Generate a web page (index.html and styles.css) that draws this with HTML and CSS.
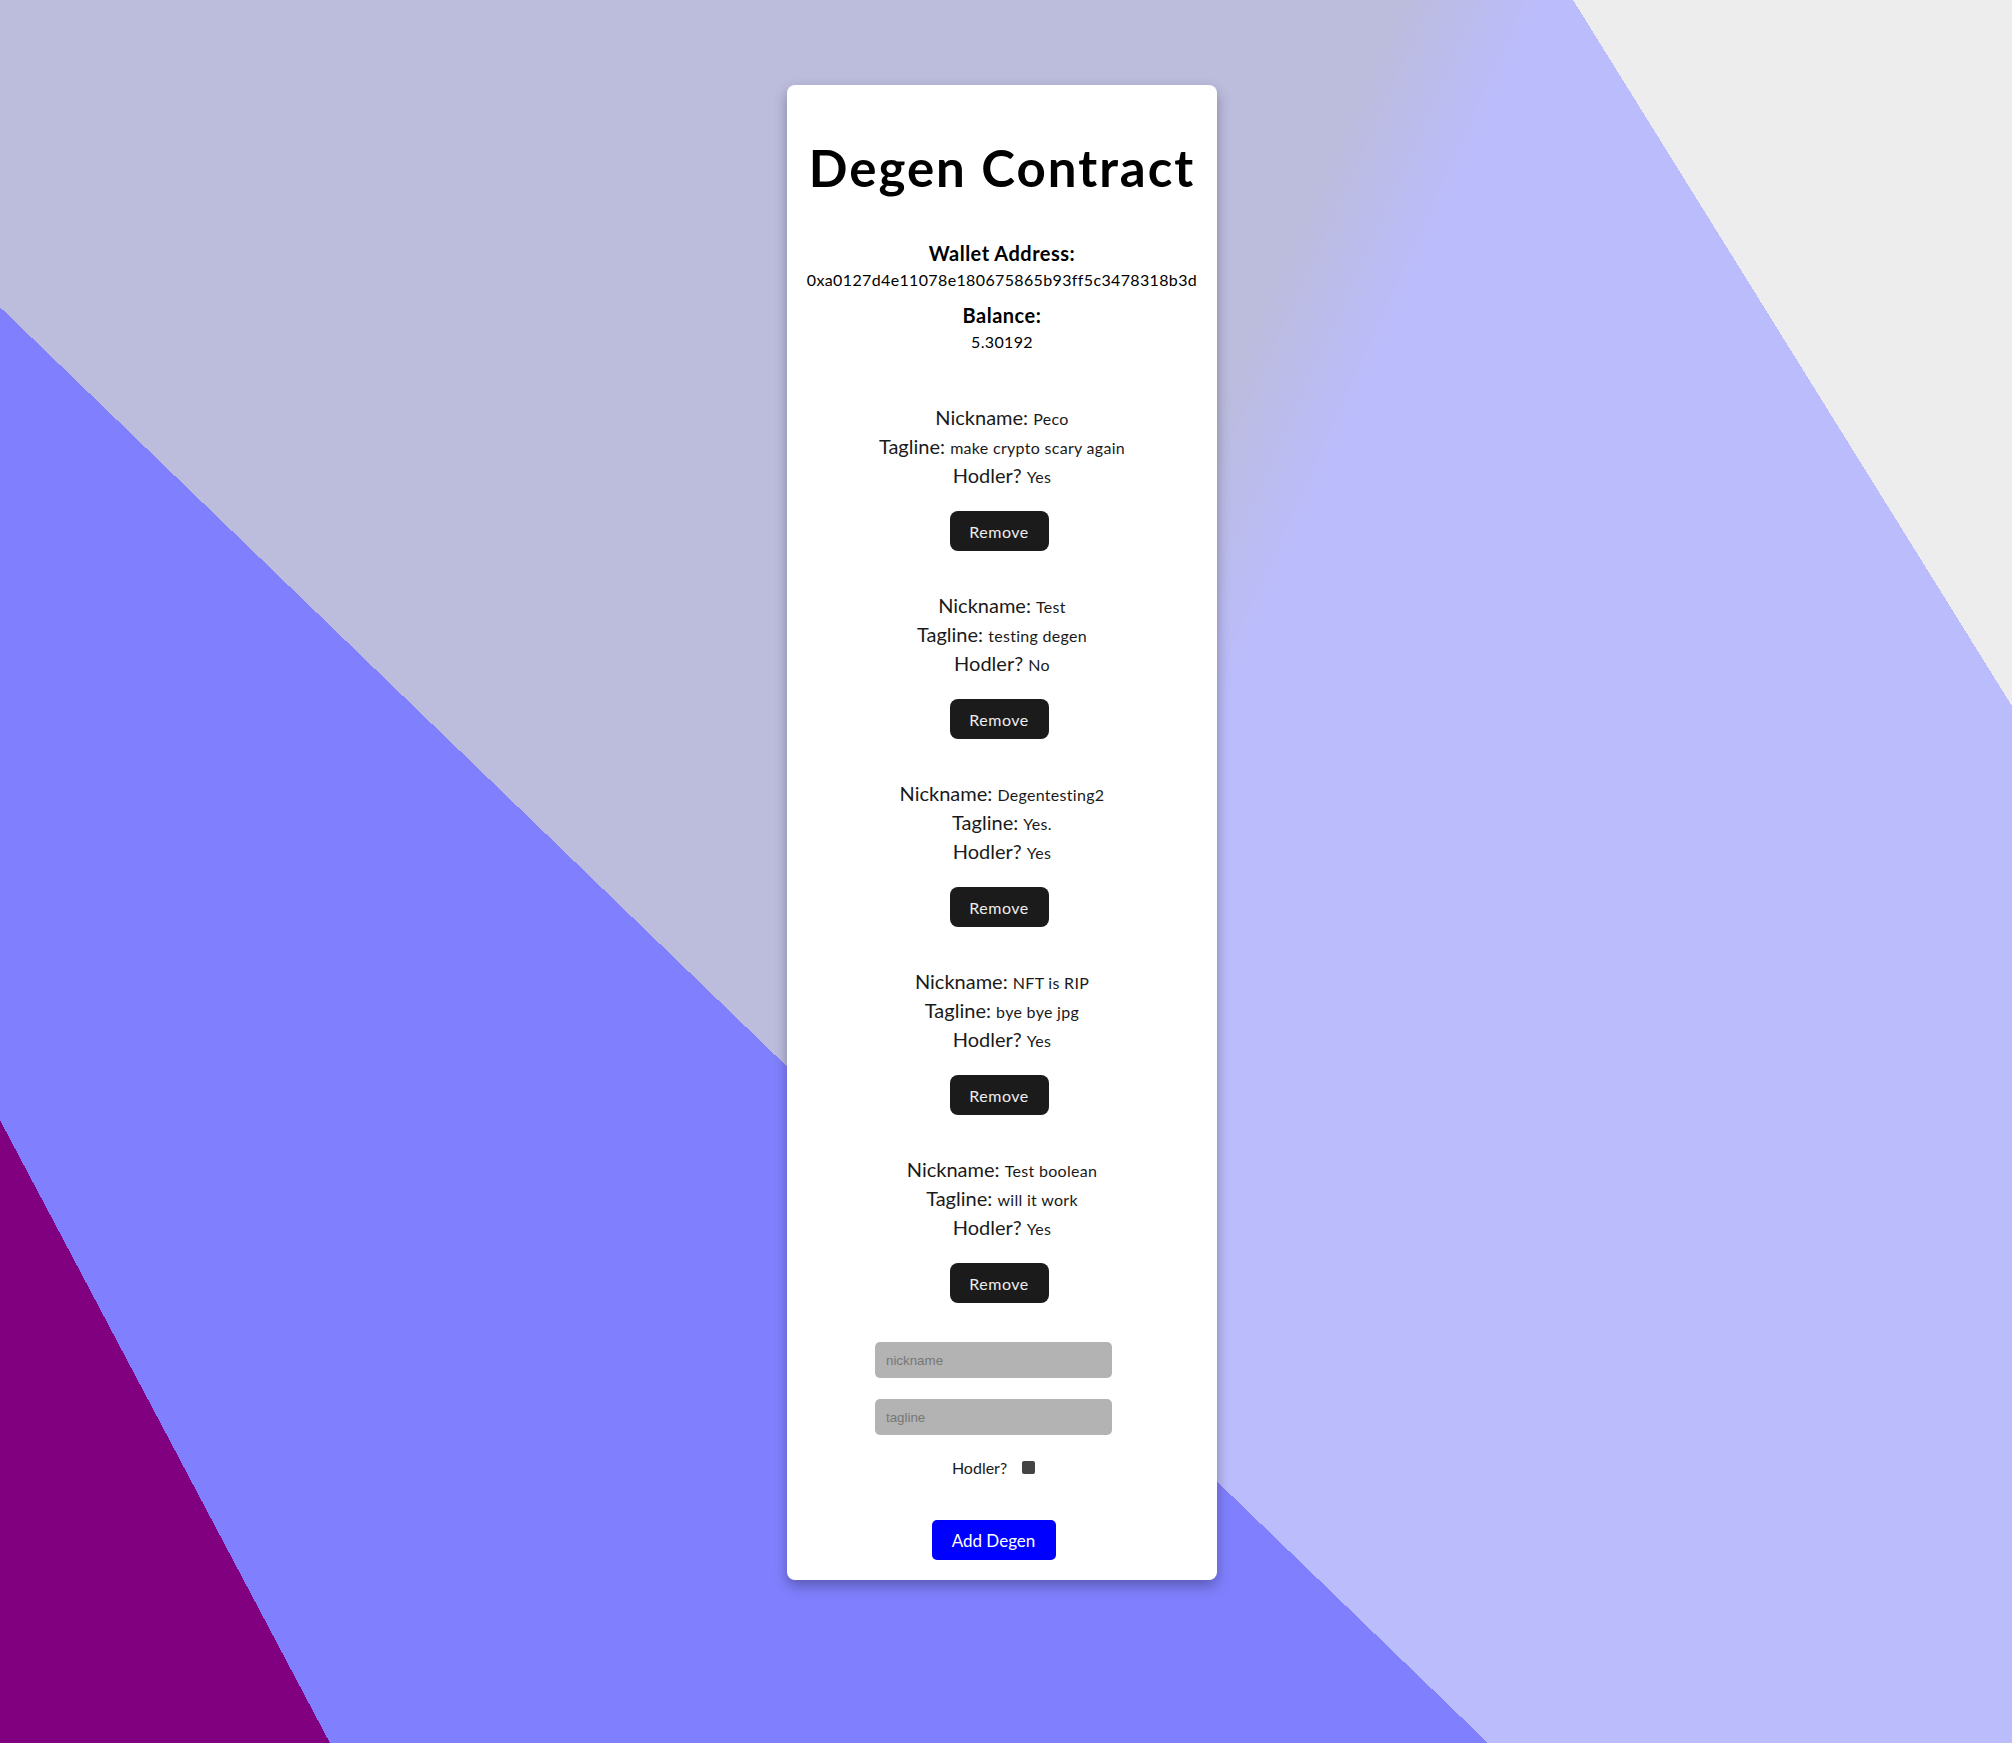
FILE: index.html
```html
<!DOCTYPE html>
<html lang="en">
<head>
    <meta charset="UTF-8">
    <meta name="viewport" content="width=device-width, initial-scale=1.0">
    <title>Degen Contract</title>
    <link rel="stylesheet" href="styles.css">
</head>
<body>
<div class="page">
    <main class="card">
        <h1>Degen Contract</h1>

        <section class="wallet">
            <div class="field">
                <h3>Wallet Address:</h3>
                <p>0xa0127d4e11078e180675865b93ff5c3478318b3d</p>
            </div>
            <div class="field">
                <h3>Balance:</h3>
                <p>5.30192</p>
            </div>
        </section>

        <section class="degens">
            <div class="degen">
                <p>Nickname: <span>Peco</span></p>
                <p>Tagline: <span>make crypto scary again</span></p>
                <p>Hodler? <span>Yes</span></p>
                <button class="remove">Remove</button>
            </div>
            <div class="degen">
                <p>Nickname: <span>Test</span></p>
                <p>Tagline: <span>testing degen</span></p>
                <p>Hodler? <span>No</span></p>
                <button class="remove">Remove</button>
            </div>
            <div class="degen">
                <p>Nickname: <span>Degentesting2</span></p>
                <p>Tagline: <span>Yes.</span></p>
                <p>Hodler? <span>Yes</span></p>
                <button class="remove">Remove</button>
            </div>
            <div class="degen">
                <p>Nickname: <span>NFT is RIP</span></p>
                <p>Tagline: <span>bye bye jpg</span></p>
                <p>Hodler? <span>Yes</span></p>
                <button class="remove">Remove</button>
            </div>
            <div class="degen">
                <p>Nickname: <span>Test boolean</span></p>
                <p>Tagline: <span>will it work</span></p>
                <p>Hodler? <span>Yes</span></p>
                <button class="remove">Remove</button>
            </div>
        </section>

        <form class="add-form" onsubmit="return false">
            <input type="text" name="nickname" placeholder="nickname">
            <input type="text" name="tagline" placeholder="tagline">
            <label class="hodler">Hodler? <input type="checkbox" name="hodler"></label>
            <button type="submit" class="add">Add Degen</button>
        </form>
    </main>
</div>
</body>
</html>
```

FILE: styles.css
```css
body {
    margin: 0;
    font-family: Lato, "Open Sans", sans-serif;
    color: #000;
}

/* flat shapes behind the card */
.page {
    min-height: 100vh;
    box-sizing: border-box;
    padding: 85px 8px 0 0;
    display: flex;
    justify-content: center;
    align-items: flex-start;
    background:
        linear-gradient(58.13deg, transparent 85.82%, #ededed 85.82%),
        linear-gradient(242.09deg, transparent 88.76%, #800080 88.76%),
        linear-gradient(223.98deg, transparent 61.03%, #8080ff 61.03%),
        linear-gradient(114.4deg, #bcbcdd 50%, #bbbcfb 55%);
}

.card {
    background-color: #fff;
    border-radius: 8px;
    padding: 20px;
    box-shadow: 0 6px 14px rgba(0, 0, 0, 0.3);
    text-align: center;
}

h1 {
    font-size: 51px;
    line-height: 60px;
    font-weight: 700;
    letter-spacing: 2px;
    margin: 33px 0 0;
}

.wallet {
    margin-top: 43px;
}

.field {
    margin-bottom: 13px;
}

.field h3 {
    font-size: 20px;
    line-height: 24px;
    font-weight: 700;
    letter-spacing: 0.5px;
    margin: 0 0 5px;
}

.field p {
    font-size: 16px;
    line-height: 20px;
    letter-spacing: 0.36px;
    margin: 0;
}

.degens {
    margin-top: 51px;
    display: flex;
    flex-direction: column;
    gap: 40px;
}

.degen {
    display: flex;
    flex-direction: column;
    align-items: center;
}

.degen p {
    font-size: 20px;
    line-height: 29px;
    color: #1a1a1a;
    margin: 0;
}

.degen span {
    font-size: 16px;
    line-height: 1;
    letter-spacing: 0.3px;
}

.remove {
    width: 99px;
    height: 40px;
    margin: 21px 6px 0 0;
    border: none;
    border-radius: 8px;
    background-color: #1b1b1b;
    color: #eee;
    font-family: inherit;
    font-size: 16px;
    letter-spacing: 0.5px;
    cursor: pointer;
}

.add-form {
    margin-top: 39px;
    padding-right: 17px;
    display: flex;
    flex-direction: column;
    align-items: center;
}

.add-form input[type="text"] {
    width: 237px;
    height: 36px;
    box-sizing: border-box;
    padding: 0 11px;
    border: none;
    border-radius: 5px;
    background-color: #b3b3b3;
    font-family: "Liberation Sans", Arial, sans-serif;
    font-size: 13.33px;
    margin-bottom: 21px;
}

.add-form input[type="text"]::placeholder {
    color: #777;
}

.hodler {
    font-size: 16px;
    line-height: 20px;
    color: #1a1a1a;
    margin-top: 2px;
    display: flex;
    align-items: center;
    gap: 15px;
}

.hodler input {
    appearance: none;
    width: 13px;
    height: 13px;
    margin: 0 0 2px;
    border-radius: 2px;
    background-color: #444;
}

.add {
    width: 124px;
    height: 40px;
    margin-top: 42px;
    border: none;
    border-radius: 5px;
    background-color: #00f;
    color: #fff;
    font-family: inherit;
    font-size: 17px;
    cursor: pointer;
}
```
